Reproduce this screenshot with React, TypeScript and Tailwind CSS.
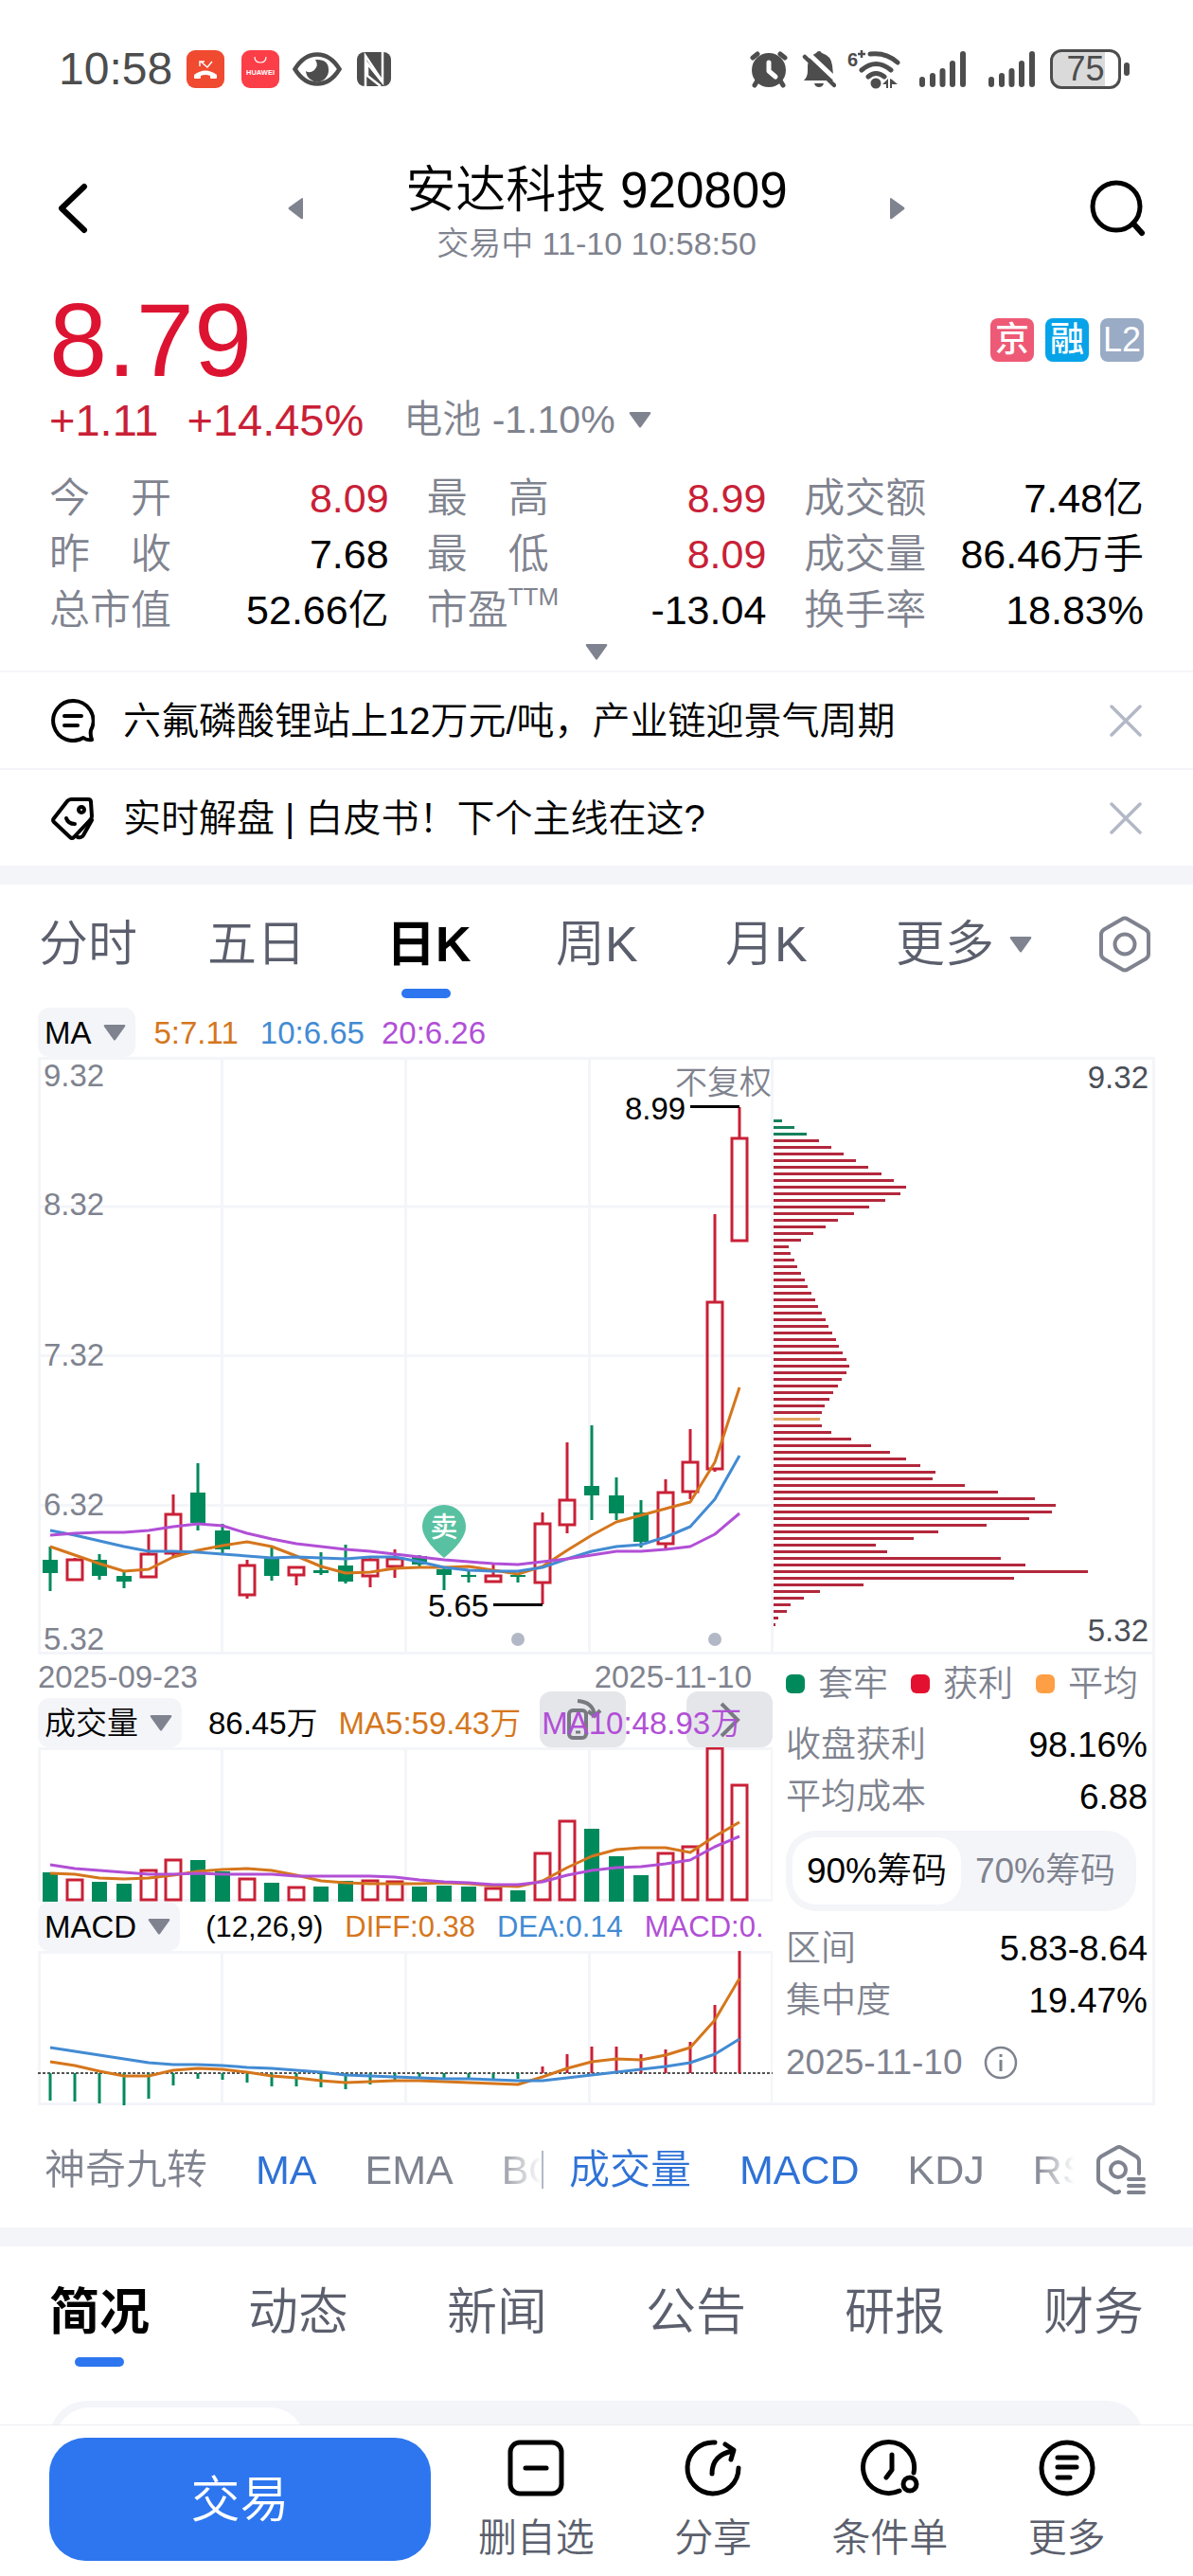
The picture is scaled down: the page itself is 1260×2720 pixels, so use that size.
import type { ReactNode } from 'react';

// [high, body top, body bottom, low, rising]
const candles = [
  [517, 531, 545, 564, 0], [529, 531, 552, 553, 1], [525, 531, 548, 552, 0], [544, 548, 554, 561, 0],
  [504, 525, 549, 550, 1], [462, 483, 524, 528, 1], [429, 460, 492, 500, 0], [493, 500, 520, 524, 0],
  [531, 537, 568, 572, 1], [518, 530, 548, 553, 0], [538, 539, 547, 558, 1], [523, 542, 545, 547, 0],
  [515, 537, 554, 556, 0], [527, 531, 548, 560, 1], [520, 530, 538, 550, 1], [526, 527, 536, 538, 0],
  [540, 541, 547, 563, 0], [542, 547, 549, 555, 0], [536, 548, 554, 555, 1], [545, 547, 549, 555, 0],
  [481, 493, 555, 578, 1], [407, 468, 494, 503, 1], [389, 453, 463, 489, 0], [444, 463, 482, 489, 0],
  [468, 481, 512, 518, 0], [446, 460, 514, 521, 1], [393, 428, 459, 467, 1], [166, 259, 435, 438, 1],
  [53, 86, 194, 194, 1],
];

const ma5 = [517, 526, 535, 543, 541, 528, 521, 516, 512, 517, 527, 538, 545, 544, 540, 539, 539, 538, 542, 546, 538, 521, 505, 491, 484, 477, 470, 428, 349];
const ma10 = [500, 505, 511, 517, 522, 522, 523, 525, 527, 529, 528, 529, 530, 528, 528, 533, 539, 542, 543, 543, 539, 530, 522, 517, 515, 507, 496, 467, 421];
const ma20 = [505, 503, 502, 502, 500, 496, 493, 495, 503, 509, 514, 517, 520, 522, 525, 528, 531, 533, 535, 536, 533, 530, 526, 522, 522, 520, 517, 504, 482];

const volume = [132, 140, 142, 144, 130, 119, 119, 131, 139, 143, 148, 147, 141, 141, 142, 147, 146, 147, 149, 151, 112, 78, 86, 115, 135, 112, 105, 1, 40];
const volMa5 = [133, 134, 138, 139, 138, 135, 131, 129, 128, 130, 135, 141, 143, 144, 144, 144, 143, 144, 146, 147, 141, 127, 115, 108, 106, 106, 111, 94, 79];
const volMa10 = [124, 128, 130, 132, 134, 134, 133, 134, 134, 134, 136, 136, 136, 136, 137, 140, 142, 143, 145, 145, 142, 135, 130, 127, 126, 123, 119, 105, 94];

const macd = [158, 159, 161, 163, 156, 142, 135, 136, 139, 143, 143, 144, 146, 141, 137, 135, 135, 135, 135, 135, 122, 109, 101, 101, 109, 104, 96, 57, 0];
const diff = [117, 121, 127, 132, 132, 126, 124, 125, 128, 132, 134, 137, 139, 138, 137, 137, 138, 139, 140, 141, 133, 124, 117, 114, 115, 110, 102, 73, 29];
const dea = [102, 106, 110, 114, 118, 120, 120, 121, 123, 124, 126, 128, 131, 132, 133, 134, 135, 135, 136, 137, 137, 134, 131, 128, 125, 122, 118, 109, 93];

const chips = [
  9, 22, 35, 48, 61, 74, 87, 100, 114, 127, 140, 134, 118, 101, 85, 68, 55, 42, 29, 16, 18, 22, 25, 29, 33, 36, 40, 44, 47,
  51, 55, 58, 62, 66, 69, 73, 77, 80, 77, 72, 68, 63, 59, 54, 51, 49, 51, 61, 82, 103, 123, 140, 155, 171, 168, 202, 237,
  276, 298, 294, 270, 225, 174, 148, 108, 120, 240, 266, 332, 254, 95, 49, 32, 18, 14, 5, 2,
];

const RED = '#c92036';
const GREEN = '#008a5c';
const ORANGE = '#d5761c';
const BLUE = '#428bd3';
const PURPLE = '#b14fd6';
const LINE = '#f4f5f9';

const xAt = (i: number) => 13 + i * 26;
const toPoints = (ys: number[]) => ys.map((y, i) => `${xAt(i)},${y}`).join(' ');

function Line({ ys, color }: { ys: number[]; color: string }) {
  return <polyline points={toPoints(ys)} fill="none" stroke={color} strokeWidth="3" strokeLinejoin="round" />;
}

function Frame({ height }: { height: number }) {
  return (
    <g stroke={LINE} strokeWidth="3">
      <rect x="1.5" y="1.5" width="774" height={height - 3} fill="none" />
      <path d={`M194.5 0V${height}M388.5 0V${height}M582.5 0V${height}`} />
    </g>
  );
}

function Caret({ className = '' }: { className?: string }) {
  return (
    <svg viewBox="0 0 24 17" className={`h-[17px] w-6 shrink-0 fill-[#7f838f] ${className}`} aria-hidden="true">
      <path d="M2 0h20q2 0 1 2L13 16q-1 1-2 0L1 2Q0 0 2 0Z" />
    </svg>
  );
}

function Signal() {
  return (
    <svg viewBox="0 0 49 40" className="h-10 w-[49px]" aria-hidden="true">
      <g stroke="#4d4d4d" strokeWidth="6" strokeLinecap="round">
        <path d="M3 31v5M14 27v9M24.500 22v14M35 14v22M46 4v32" />
      </g>
    </svg>
  );
}

function StatusBar() {
  return (
    <div className="flex h-[146px] items-center justify-between pl-[62px] pr-[67px] text-[#4d4d4d]">
      <div className="flex items-center">
        <span className="w-[135px] text-[48px] leading-none">10:58</span>
        <svg viewBox="0 0 40 40" className="mr-[18px] size-10" aria-hidden="true">
          <rect width="40" height="40" rx="9" fill="#f04a30" />
          <path d="M14 17v-5h5M15 12l7 6 5-6" fill="none" stroke="#fff" strokeWidth="1.500" />
          <path d="M8 29v-3q12-9 24 0v3q0 1-1 1h-5q-1 0-1-1v-2q-5-2-10 0v2q0 1-1 1H9q-1 0-1-1Z" fill="#fff" />
        </svg>
        <svg viewBox="0 0 40 40" className="mr-[14px] size-10" aria-hidden="true">
          <rect width="40" height="40" rx="9" fill="#fb3e48" />
          <path d="M14 7q0 6 6 6t6-6" fill="none" stroke="#fff" strokeWidth="1.200" />
          <text x="20" y="26" fill="#fff" fontSize="7.500" fontWeight="700" textAnchor="middle">HUAWEI</text>
        </svg>
        <svg viewBox="0 0 52 36" className="mr-4 h-9 w-[52px]" aria-hidden="true">
          <path d="M2.500 18Q12 2.500 26 2.500T49.500 18Q40 33.500 26 33.500T2.500 18Z" fill="none" stroke="#4d4d4d" strokeWidth="4.500" />
          <path d="M24 8q14-1 14 10.500a12 12 0 0 1-24 1.500q4 3 9-1 5-5 1-11Z" fill="#4d4d4d" />
        </svg>
        <svg viewBox="0 0 36 36" className="size-9" aria-hidden="true">
          <rect width="36" height="36" rx="8" fill="#4d4d4d" />
          <path d="M9 36V4l18 27" fill="none" stroke="#fff" strokeWidth="2.500" />
          <path d="M27 0v32L11 12v13l14 11" fill="none" stroke="#fff" strokeWidth="2.500" />
        </svg>
      </div>
      <div className="flex items-center">
        <svg viewBox="0 0 42 40" className="mr-[14px] h-10 w-[42px]" aria-hidden="true">
          <g stroke="#4d4d4d" strokeWidth="5" strokeLinecap="round">
            <circle cx="21" cy="21" r="16" fill="#4d4d4d" strokeWidth="4" />
            <path d="M4 8l5-4M38 8l-5-4M9 32l-3 5M33 32l3 5" />
          </g>
          <path d="M21 13v9l7 6" fill="none" stroke="#fff" strokeWidth="5" strokeLinecap="round" strokeLinejoin="round" />
        </svg>
        <svg viewBox="0 0 36 40" className="mr-3 h-10 w-9" aria-hidden="true">
          <path d="M18 1q2 0 3 2 10 3 11 13l1 10 3 6H2q4-4 4-10V16Q7 6 15 3q1-2 3-2ZM13 35h10q-1 4-5 4t-5-4Z" fill="#4d4d4d" />
          <path d="M4 1l36 34" stroke="#fff" strokeWidth="5" />
          <path d="M3 7l31 30" stroke="#4d4d4d" strokeWidth="4.500" strokeLinecap="round" />
        </svg>
        <svg viewBox="0 0 56 42" className="mr-5 h-[42px] w-14" aria-hidden="true">
          <text x="0" y="18" fill="#4d4d4d" fontSize="20" fontWeight="700">6</text>
          <path d="M11 5h8M15 1v8" stroke="#4d4d4d" strokeWidth="2.500" />
          <g fill="none" stroke="#4d4d4d" strokeWidth="5" strokeLinecap="round">
            <path d="M24 5q17-2 29 9M15 22q15-13 31 0M22 29q8-7 17 0" />
          </g>
          <circle cx="30" cy="36" r="5.500" fill="#4d4d4d" />
          <path d="M37 37l6-6v10h-2v-4ZM45 31v10h2v-4h6l-6-5Z" fill="#4d4d4d" />
        </svg>
        <Signal />
        <span className="w-6" />
        <Signal />
        <span className="relative ml-4 flex h-[42px] w-[75px] items-center justify-center overflow-hidden rounded-xl border-[3px] border-[#4d4d4d] bg-linear-to-r from-[#dadada] from-80% to-white to-80% text-4xl leading-none">
          75
        </span>
        <span className="ml-[3px] h-[14px] w-[6px] rounded-full bg-[#4d4d4d]" />
      </div>
    </div>
  );
}

function Header() {
  return (
    <header className="flex h-[148px] items-center justify-between pl-[60px] pr-[50px]">
      <button aria-label="返回" className="w-[50px]">
        <svg viewBox="0 0 34 54" className="h-[54px] w-[34px]">
          <path d="M29 4L5 27l24 23" fill="none" stroke="#000" strokeWidth="6" strokeLinecap="round" strokeLinejoin="round" />
        </svg>
      </button>
      <div className="flex w-[654px] items-center justify-between">
        <button aria-label="上一只">
          <svg viewBox="0 0 18 24" className="h-6 w-[18px] fill-[#7f838f]">
            <path d="M16 1q1 0 1 1v20q0 2-2 1L2 13q-1-1 0-2Z" />
          </svg>
        </button>
        <div className="pt-[14px] text-center">
          <h1 className="text-[53px] leading-[60px]">安达科技 920809</h1>
          <p className="text-[34px] leading-[52px] text-[#7f838f]">交易中 11-10 10:58:50</p>
        </div>
        <button aria-label="下一只">
          <svg viewBox="0 0 18 24" className="h-6 w-[18px] fill-[#7f838f]">
            <path d="M2 1q-1 0-1 1v20q0 2 2 1l13-10q1-1 0-2Z" />
          </svg>
        </button>
      </div>
      <button aria-label="搜索">
        <svg viewBox="0 0 60 60" className="size-[60px]">
          <g fill="none" stroke="#000" strokeWidth="5" strokeLinecap="round">
            <circle cx="29" cy="28" r="25" />
            <path d="M47 46l9 10" strokeWidth="6" />
          </g>
        </svg>
      </button>
    </header>
  );
}

const quotes: { id: string; label: ReactNode; value: string; up?: boolean }[] = [
  { id: 'open', label: '今　开', value: '8.09', up: true },
  { id: 'high', label: '最　高', value: '8.99', up: true },
  { id: 'amount', label: '成交额', value: '7.48亿' },
  { id: 'prev', label: '昨　收', value: '7.68' },
  { id: 'low', label: '最　低', value: '8.09', up: true },
  { id: 'volume', label: '成交量', value: '86.46万手' },
  { id: 'cap', label: '总市值', value: '52.66亿' },
  { id: 'pe', label: <>市盈<sup className="top-[-20px] text-[26px] leading-none">TTM</sup></>, value: '-13.04' },
  { id: 'turnover', label: '换手率', value: '18.83%' },
];

function Quote() {
  return (
    <section className="px-[52px]">
      <div className="flex h-[130px] items-center justify-between">
        <strong className="text-[110px] font-normal leading-none text-[#dd1431]">8.79</strong>
        <div className="flex items-center gap-3 text-center font-medium text-white">
          <span className="size-[46px] rounded-lg bg-[#ee5a75] text-4xl leading-[46px]">京</span>
          <span className="size-[46px] rounded-lg bg-[#06a3e9] text-4xl leading-[46px]">融</span>
          <span className="size-[46px] rounded-lg bg-[#9aabc5] text-4xl leading-[46px]">L2</span>
        </div>
      </div>
      <div className="flex h-[38px] items-center text-[47px] leading-none text-[#c92036]">
        <span>+1.11</span>
        <span className="ml-[30px]">+14.45%</span>
        <button className="ml-[42px] flex items-center text-[41px] leading-none text-[#7f838f]">
          电池 -1.10%
          <Caret className="ml-[14px]" />
        </button>
      </div>
      <dl className="mt-[35px] grid grid-cols-3 gap-x-10 text-[43px] leading-[59px]">
        {quotes.map((q) => (
          <div key={q.id} className="flex h-[59px] justify-between whitespace-nowrap">
            <dt className="text-[#7f838f]">{q.label}</dt>
            <dd className={q.up ? 'text-[#c92036]' : 'text-black'}>{q.value}</dd>
          </div>
        ))}
      </dl>
      <button aria-label="展开" className="mx-auto flex h-[34px] items-start pt-[6px]">
        <Caret />
      </button>
    </section>
  );
}

function Notice({ icon, children }: { icon: ReactNode; children: ReactNode }) {
  return (
    <div className="flex h-[103px] items-center border-t-2 border-[#f4f5f9] px-[54px]">
      {icon}
      <a href="#news" className="ml-[30px] flex-1 text-[40px] leading-none">{children}</a>
      <button aria-label="关闭">
        <svg viewBox="0 0 34 34" className="size-[34px]">
          <path d="M2 2l30 30M32 2L2 32" stroke="#b3b8c6" strokeWidth="3.500" strokeLinecap="round" />
        </svg>
      </button>
    </div>
  );
}

function Notices() {
  return (
    <section>
      <Notice
        icon={
          <svg viewBox="0 0 46 46" className="size-[46px]" fill="none" stroke="#000" strokeWidth="4" strokeLinecap="round" strokeLinejoin="round">
            <path d="M23 2a21 21 0 1 0 11 39q4 3 9 2-2-5-1-10A21 21 0 0 0 23 2Z" />
            <path d="M14 18h18M14 28h14" />
          </svg>
        }
      >
        六氟磷酸锂站上12万元/吨，产业链迎景气周期
      </Notice>
      <Notice
        icon={
          <svg viewBox="0 0 46 46" className="size-[46px]" fill="none" stroke="#000" strokeWidth="4" strokeLinecap="round" strokeLinejoin="round">
            <path d="M21 3h18q3 0 3 3l1 15q0 2-2 4L24 43q-2 2-4 0L3 27q-2-2 0-4L17 5q2-2 4-2Z" />
            <path d="M43 25L34 41q-2 3-6 2" />
            <circle cx="32" cy="14" r="3" />
            <path d="M16 23q2 6 9 6" />
          </svg>
        }
      >
        实时解盘 | 白皮书！下个主线在这?
      </Notice>
    </section>
  );
}

function PeriodTabs() {
  const tab = 'relative h-[124px] pt-[2px] text-left';
  return (
    <nav className="grid grid-cols-[178fr_189fr_179fr_179fr_180fr_215fr_59fr] pl-[41px] pr-10 text-[52px] text-[#5b5f6d]">
      <button className={tab}>分时</button>
      <button className={tab}>五日</button>
      <button className={`${tab} font-bold text-black`}>
        日K
        <span className="absolute bottom-[4px] left-[16px] h-[10px] w-[52px] rounded-full bg-[#2d76ef]" />
      </button>
      <button className={tab}>周K</button>
      <button className={tab}>月K</button>
      <button className={`${tab} flex items-center`}>
        更多
        <Caret className="ml-4" />
      </button>
      <button aria-label="设置" className={tab}>
        <svg viewBox="0 0 54 60" className="h-[60px] w-[54px]" fill="none" stroke="#7f838f" strokeWidth="4">
          <path d="M24 3.500q3-2 6 0l19 11q3 2 3 5v21q0 3-3 5l-19 11q-3 2-6 0l-19-11q-3-2-3-5v-21q0-3 3-5Z" />
          <circle cx="27" cy="30" r="10.500" />
        </svg>
      </button>
    </nav>
  );
}

function LegendButton({ children }: { children: ReactNode }) {
  return (
    <button className="flex h-[52px] shrink-0 items-center gap-3 rounded-xl bg-[#f4f5f9] pl-[7px] pr-[10px] text-black">
      {children}
      <Caret />
    </button>
  );
}

function CandleChart() {
  return (
    <svg viewBox="0 0 776 631" className="block h-auto w-full overflow-visible" role="img" aria-label="日K线">
      <Frame height={631} />
      <path d="M0 158H776M0 315.500H776M0 473.500H776" stroke={LINE} strokeWidth="3" />
      <g fontSize="33" fill="#7f838f">
        <text x="6" y="31">9.32</text>
        <text x="6" y="167">8.32</text>
        <text x="6" y="326">7.32</text>
        <text x="6" y="484">6.32</text>
        <text x="6" y="626">5.32</text>
        <text x="775" y="39" textAnchor="end" fontSize="34">不复权</text>
      </g>
      {candles.map(([high, top, bottom, low, rising], i) => (
        <g key={i} stroke={rising ? RED : GREEN} strokeWidth="3">
          <path d={`M${xAt(i)} ${high}V${top}M${xAt(i)} ${bottom}V${low}`} />
          {rising ? (
            <rect x={xAt(i) - 8} y={top} width="16" height={bottom - top} fill="none" />
          ) : (
            <rect x={xAt(i) - 8} y={top} width="16" height={bottom - top} fill={GREEN} stroke="none" />
          )}
        </g>
      ))}
      <Line ys={ma5} color={ORANGE} />
      <Line ys={ma10} color={BLUE} />
      <Line ys={ma20} color={PURPLE} />
      <path d="M429 529Q406 510 406 496a23 23 0 0 1 46 0Q452 510 429 529Z" fill="#58c1a1" />
      <text x="429" y="507" fontSize="29" fontWeight="500" fill="#fff" textAnchor="middle">卖</text>
      <g fontSize="33" fill="#000">
        <text x="412" y="591">5.65</text>
        <text x="620" y="66">8.99</text>
      </g>
      <path d="M481 578.500H533M689 52.500H741" stroke="#000" strokeWidth="3" />
      <circle cx="507" cy="615" r="7" fill="#b3b8c6" />
      <circle cx="715" cy="615" r="7" fill="#b3b8c6" />
    </svg>
  );
}

function VolumeChart() {
  return (
    <svg viewBox="0 0 776 163" className="block h-auto w-full" role="img" aria-label="成交量">
      <Frame height={163} />
      {volume.map((top, i) =>
        candles[i][4] ? (
          <rect key={i} x={xAt(i) - 8} y={top} width="16" height={161 - top} fill="none" stroke={RED} strokeWidth="3" />
        ) : (
          <rect key={i} x={xAt(i) - 8} y={top} width="16" height={163 - top} fill={GREEN} />
        ),
      )}
      <Line ys={volMa5} color={ORANGE} />
      <Line ys={volMa10} color={PURPLE} />
    </svg>
  );
}

function MacdChart() {
  return (
    <svg viewBox="0 0 776 163" className="block h-auto w-full" role="img" aria-label="MACD">
      <Frame height={163} />
      <path d="M0 129H776" stroke="#555" strokeWidth="2" strokeDasharray="3 2" />
      {macd.map((y, i) => (
        <path key={i} d={`M${xAt(i)} 129V${y}`} stroke={y > 129 ? GREEN : RED} strokeWidth="3" />
      ))}
      <Line ys={diff} color={ORANGE} />
      <Line ys={dea} color={BLUE} />
    </svg>
  );
}

function ChipChart() {
  const color = (i: number) => (i < 3 ? '#14805c' : i === 45 ? '#e2a760' : '#b3283c');
  return (
    <svg viewBox="0 0 404 631" className="block h-auto w-full" role="img" aria-label="筹码分布">
      <path d="M0 1.500H402.500V629.500H0" fill="none" stroke={LINE} strokeWidth="3" />
      {chips.map((w, i) => (
        <rect key={i} x="1" y={66 + i * 7} width={w} height="3" fill={color(i)} />
      ))}
      <g fontSize="33" fill="#4a4f57" textAnchor="end">
        <text x="397" y="33">9.32</text>
        <text x="397" y="617">5.32</text>
      </g>
    </svg>
  );
}

function StatRow({ label, value }: { label: string; value: string }) {
  return (
    <div className="flex h-[55px] items-center justify-between">
      <dt className="text-[#7f838f]">{label}</dt>
      <dd>{value}</dd>
    </div>
  );
}

function ChipPanel() {
  return (
    <div className="flex h-[476px] flex-col border-b-[3px] border-r-[3px] border-[#f4f5f9] pl-[14px] pr-[5px] text-[37px] leading-none">
      <ul className="flex h-[62px] items-center gap-6 whitespace-nowrap text-[#7f838f]">
        <li className="flex items-center gap-[14px]"><i className="size-5 rounded-md bg-[#008a5c]" />套牢</li>
        <li className="flex items-center gap-[14px]"><i className="size-5 rounded-md bg-[#e3112f]" />获利</li>
        <li className="flex items-center gap-[14px]"><i className="size-5 rounded-md bg-[#ff9f45]" />平均</li>
      </ul>
      <dl className="mt-[6px]">
        <StatRow label="收盘获利" value="98.16%" />
        <StatRow label="平均成本" value="6.88" />
      </dl>
      <div className="mr-3 mt-2 grid h-[85px] shrink-0 grid-cols-2 rounded-[32px] bg-[#f4f5f9] p-[7px]">
        <button className="rounded-[25px] bg-white">90%筹码</button>
        <button className="text-[#7f838f]">70%筹码</button>
      </div>
      <dl className="mt-3">
        <StatRow label="区间" value="5.83-8.64" />
        <StatRow label="集中度" value="19.47%" />
      </dl>
      <div className="mt-[10px] flex h-[55px] items-center text-[#7f838f]">
        2025-11-10
        <button aria-label="说明" className="ml-[22px]">
          <svg viewBox="0 0 36 36" className="size-9" fill="none" stroke="#7f838f" strokeWidth="2.500">
            <circle cx="18" cy="18" r="16" />
            <path d="M18 15v12M18 9v3" strokeWidth="3" />
          </svg>
        </button>
      </div>
    </div>
  );
}

function Charts() {
  return (
    <section className="mt-[6px] px-10">
      <div className="flex items-center text-[33px] leading-none">
        <LegendButton>MA</LegendButton>
        <span className="ml-5 text-[#d5761c]">5:7.11</span>
        <span className="ml-[23px] text-[#428bd3]">10:6.65</span>
        <span className="ml-[18px] text-[#b14fd6]">20:6.26</span>
      </div>
      <div className="grid grid-cols-[776fr_404fr]">
        <div className="min-w-0">
          <CandleChart />
          <div className="flex h-[46px] items-center justify-between pr-[22px] text-[33px] leading-none text-[#7f838f]">
            <time>2025-09-23</time>
            <time>2025-11-10</time>
          </div>
          <div className="relative flex h-[52px] items-center whitespace-nowrap text-[33px] leading-none">
            <button aria-label="横屏" className="absolute bottom-0 right-[155px] flex h-[59px] w-[91px] items-center justify-center rounded-xl bg-[#e5e6ea]">
              <svg viewBox="0 0 40 46" className="h-[46px] w-10" fill="none" stroke="#777a80" strokeWidth="4">
                <rect x="5" y="13" width="18" height="29" rx="4" />
                <path d="M14 3q16 1 18 15M25 14l7 5 6-6" />
                <path d="M12 36h5" strokeWidth="3" />
              </svg>
            </button>
            <button aria-label="下一个" className="absolute bottom-0 right-0 flex h-[59px] w-[91px] items-center justify-center rounded-xl bg-[#e5e6ea]">
              <svg viewBox="0 0 22 38" className="h-[38px] w-[22px]" fill="none" stroke="#777a80" strokeWidth="4">
                <path d="M2 2l17 17L2 36" />
              </svg>
            </button>
            <LegendButton>成交量</LegendButton>
            <span className="relative ml-[28px]">86.45万</span>
            <span className="relative ml-[22px] text-[#d5761c]">MA5:59.43万</span>
            <span className="relative ml-[22px] text-[#b14fd6]">MA10:48.93万</span>
          </div>
          <VolumeChart />
          <div className="flex h-[52px] items-center whitespace-nowrap text-[31px] leading-none">
            <LegendButton><span className="text-[33px]">MACD</span></LegendButton>
            <span className="ml-[27px]">(12,26,9)</span>
            <span className="ml-[23px] text-[#d5761c]">DIFF:0.38</span>
            <span className="ml-[23px] text-[#428bd3]">DEA:0.14</span>
            <span className="ml-[23px] text-[#b14fd6]">MACD:0.</span>
          </div>
          <MacdChart />
        </div>
        <div>
          <ChipChart />
          <ChipPanel />
        </div>
      </div>
    </section>
  );
}

function IndicatorBar() {
  return (
    <nav className="flex h-[129px] items-center pl-[47px] pr-[49px] pt-[6px] text-[43px] leading-[60px] text-[#7f838f]">
      <div className="flex flex-[525] gap-[51px] overflow-hidden whitespace-nowrap mask-r-from-90%">
        <button>神奇九转</button>
        <button className="text-[#2f72d6]">MA</button>
        <button>EMA</button>
        <button>BOLL</button>
      </div>
      <span className="mr-[27px] h-10 w-[2px] bg-[#b3b8c6]" />
      <div className="mr-[22px] flex flex-[534] gap-[51px] overflow-hidden whitespace-nowrap mask-r-from-92%">
        <button className="text-[#2f72d6]">成交量</button>
        <button className="text-[#2f72d6]">MACD</button>
        <button>KDJ</button>
        <button>RSI</button>
      </div>
      <button aria-label="指标设置">
        <svg viewBox="0 0 54 52" className="h-[52px] w-[54px]" fill="none" stroke="#7f838f" strokeWidth="4" strokeLinecap="round">
          <path d="M46 30V17q0-3-3-5L28 3q-3-2-6 0L6 12q-3 2-3 5v19q0 3 3 5l14 9q3 1 5-1" />
          <circle cx="24" cy="26" r="8" />
          <path d="M35 36h16M35 43h16M35 50h16" />
        </svg>
      </button>
    </nav>
  );
}

function InfoTabs() {
  return (
    <nav className="flex justify-between px-[52px] text-[53px] text-[#5b5f6d]">
      <button className="relative h-[136px] pt-1 font-bold text-black">
        简况
        <span className="absolute bottom-[9px] left-[27px] h-[10px] w-[52px] rounded-full bg-[#2d76ef]" />
      </button>
      {['动态', '新闻', '公告', '研报', '财务'].map((name) => (
        <button key={name} className="h-[136px] pt-1">{name}</button>
      ))}
    </nav>
  );
}

function Action({ label, children }: { label: string; children: ReactNode }) {
  return (
    <button className="flex flex-1 flex-col items-center text-[41px] leading-[50px] text-[#5b5f6d]">
      <svg viewBox="0 0 64 64" className="mb-[17px] size-16" fill="none" stroke="#000" strokeWidth="5" strokeLinecap="round" strokeLinejoin="round">
        {children}
      </svg>
      {label}
    </button>
  );
}

function BottomBar() {
  return (
    <footer className="fixed inset-x-0 bottom-0 flex h-[160px] border-t border-[#ececf0] bg-white pl-[52px] pr-10 pt-[13px]">
      <button className="mr-[18px] h-[130px] w-[403px] rounded-[38px] bg-[#2d76ef] pt-[2px] text-[52px] text-white">交易</button>
      <div className="flex flex-1">
        <Action label="删自选">
          <rect x="5" y="5" width="54" height="54" rx="10" />
          <path d="M21 32h22" />
        </Action>
        <Action label="分享">
          <path d="M34 5a27 27 0 1 0 25 27" />
          <path d="M31 38q0-20 22-24M45 7l9 6-3 10" />
        </Action>
        <Action label="条件单">
          <path d="M42 56a27 27 0 1 1 15-19" />
          <circle cx="53" cy="49" r="7" />
          <path d="M34 18v16l-6 8" />
        </Action>
        <Action label="更多">
          <circle cx="32" cy="32" r="27" />
          <path d="M22 21h20M22 31h20M22 42h13" />
        </Action>
      </div>
    </footer>
  );
}

export default function App() {
  return (
    <div className="min-h-screen bg-white pb-40 font-['Liberation_Sans','Noto_Sans_CJK_SC',sans-serif] font-[350] text-black">
      <StatusBar />
      <Header />
      <main>
        <Quote />
        <Notices />
        <div className="h-5 bg-[#f4f5f9]" />
        <PeriodTabs />
        <Charts />
        <IndicatorBar />
        <div className="h-5 bg-[#f4f5f9]" />
        <InfoTabs />
        <div className="mx-[52px] mt-[27px] flex h-[84px] rounded-[40px] bg-[#f4f5f9] p-[7px]">
          <div className="w-[262px] rounded-[35px] bg-white" />
        </div>
      </main>
      <BottomBar />
    </div>
  );
}
